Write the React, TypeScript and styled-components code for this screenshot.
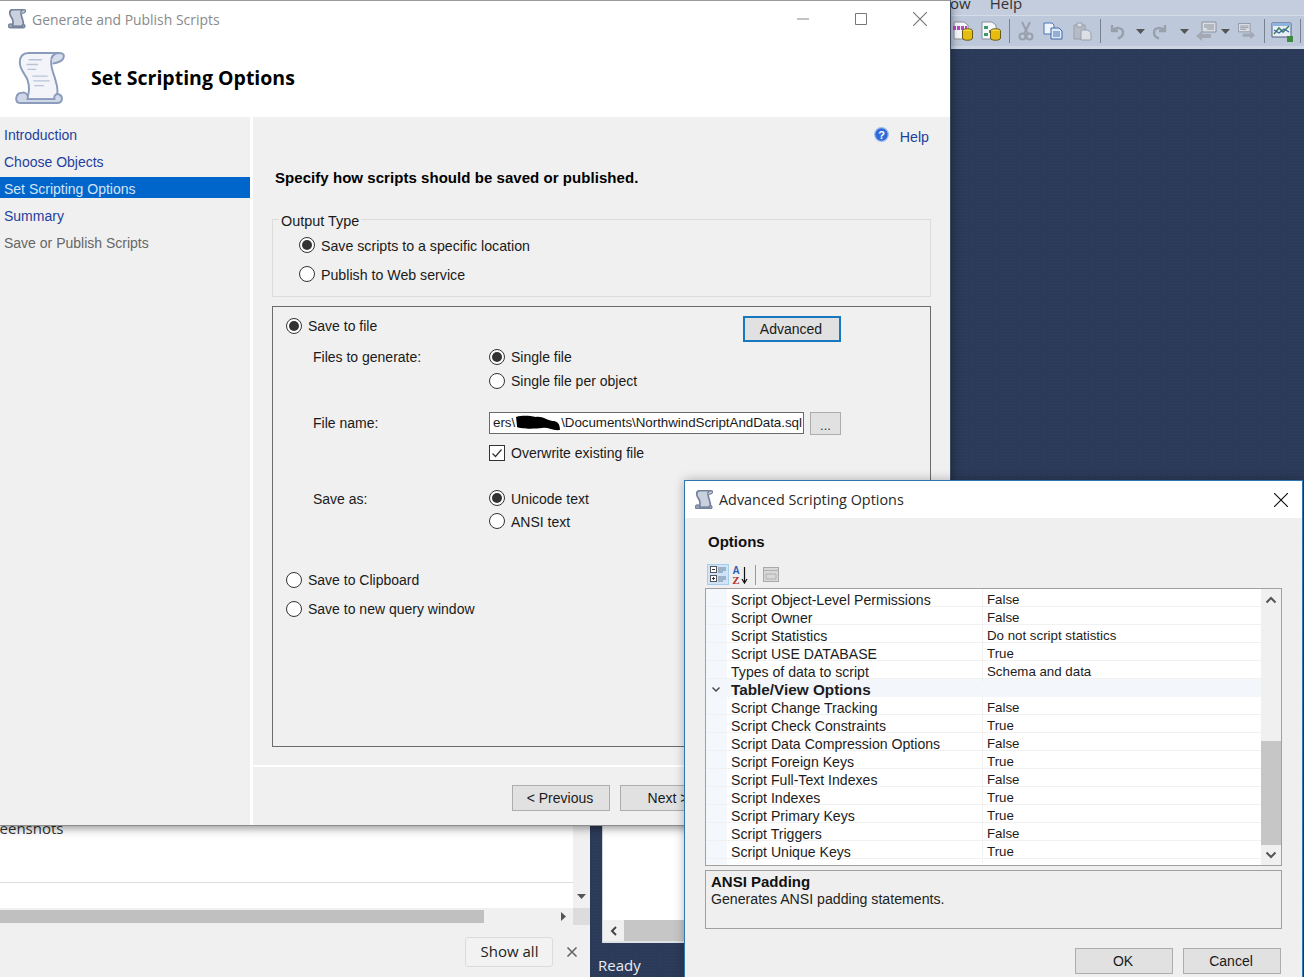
import React from "react";
import styled, { createGlobalStyle } from "styled-components";

const Global = createGlobalStyle`
  html, body { margin: 0; padding: 0; background: #2b3a58; }
  * { box-sizing: border-box; }
  body { font-family: "Liberation Sans", Arial, sans-serif; font-size: 14px; color: #1a1a1a; }
`;

const Desktop = styled.div`
  position: relative;
  width: 1304px;
  height: 977px;
  overflow: hidden;
  background-color: #2b3a58;
  background-image: radial-gradient(#31405f 0.6px, transparent 0.7px);
  background-size: 3px 3px;
`;

/* ---------- SSMS behind ---------- */
const SsmsBar = styled.div`
  position: absolute;
  left: 950px;
  top: 0;
  width: 354px;
  height: 49px;
  background: #bdc8da;
  border-bottom: 3px solid #cdd5e3;
  overflow: hidden;
`;
const MenuStrip = styled.div`
  height: 16px;
  background: #c3cdde;
  border-bottom: 1px solid #d5dce8;
  display: flex;
  align-items: flex-end;
  font-size: 15px;
  color: #333;
  line-height: 14px;
  font-family: "Open Sans", sans-serif;
  padding-bottom: 5px;
  overflow: visible;
`;
const MenuItem = styled.span<{ $ml: number }>`
  margin-left: ${(p) => p.$ml}px;
`;
const ToolRow = styled.div`
  display: flex;
  align-items: center;
  height: 30px;
`;
const Slot = styled.div<{ $w: number; $ml: number }>`
  width: ${(p) => p.$w}px;
  margin-left: ${(p) => p.$ml}px;
  height: 22px;
  flex: none;
  display: flex;
  align-items: center;
  justify-content: center;
`;
const ToolSep = styled.div<{ $ml: number }>`
  width: 1px;
  height: 24px;
  flex: none;
  background: #77818f;
  margin-left: ${(p) => p.$ml}px;
`;

/* ---------- browser behind ---------- */
const BrowserPane = styled.div`
  position: absolute;
  left: 0;
  top: 825px;
  width: 590px;
  height: 152px;
  background: #f0f0f0;
  display: flex;
  flex-direction: column;
  overflow: hidden;
`;
const BrowserTop = styled.div`
  height: 100px;
  flex: none;
  display: grid;
  grid-template-columns: 573px 17px;
  grid-template-rows: 83px 17px;
  border-bottom: 1px solid #d9d9d9;
`;
const BrowserList = styled.div`
  background: #fff;
`;
const ScreenshotsCell = styled.div`
  height: 58px;
  border-bottom: 1px solid #dcdcdc;
  font-family: "Open Sans", sans-serif;
  font-size: 15px;
  line-height: 6px;
  color: #333;
  white-space: nowrap;
  overflow: hidden;
`;
const ClippedWord = styled.span`
  display: block;
  margin-left: -22px;
`;
const VTrack = styled.div`
  background: #f0f0f0;
  display: flex;
  align-items: flex-end;
  justify-content: center;
  padding-bottom: 7px;
`;
const HTrack = styled.div`
  background: #f0f0f0;
  display: flex;
  align-items: center;
  padding: 2px 5px 2px 0;
  justify-content: space-between;
`;
const HThumb = styled.div`
  width: 484px;
  height: 13px;
  background: #c0c0c0;
`;
const Corner = styled.div`
  background: #dcdcdc;
`;
const BrowserFoot = styled.div`
  display: flex;
  align-items: center;
  justify-content: flex-end;
  gap: 13px;
  padding: 12px 12px 0 0;
`;
const ShowAll = styled.button`
  width: 88px;
  height: 30px;
  background: #f2f2f2;
  border: 1px solid #dcdcdc;
  border-radius: 3px;
  font-family: "Open Sans", sans-serif;
  font-size: 15px;
  color: #222;
  padding: 0 0 2px 1px;
`;

/* ---------- results pane behind ---------- */
const ResultsPane = styled.div`
  position: absolute;
  left: 602px;
  top: 825px;
  width: 90px;
  height: 118px;
  background: #fff;
  border-left: 1px solid #cfd3da;
  border-bottom: 2px solid #dfe2e6;
  display: flex;
  flex-direction: column;
  justify-content: flex-end;
`;
const ResultsScroll = styled.div`
  height: 21px;
  background: #f0f0f0;
  display: flex;
  align-items: center;
`;
const ResultsArrow = styled.div`
  width: 21px;
  display: flex;
  justify-content: center;
`;
const ResultsThumb = styled.div`
  flex: 1;
  height: 21px;
  background: #c6c6c6;
`;
const ReadyText = styled.div`
  position: absolute;
  left: 598px;
  top: 955px;
  font-family: "Open Sans", sans-serif;
  font-size: 15px;
  line-height: 20px;
  color: #e8ecf3;
`;

/* ---------- dialogs ---------- */
const MainDialog = styled.section`
  position: absolute;
  left: 0;
  top: 0;
  width: 951px;
  height: 826px;
  background: #fff;
  border-top: 1px solid #9a9a9a;
  border-right: 1px solid #3c4a63;
  border-bottom: 1px solid #8c8c8c;
  box-shadow: 0 2px 9px rgba(0, 0, 0, 0.45);
  display: flex;
  flex-direction: column;
  overflow: hidden;
`;
const TitleBar = styled.header`
  height: 37px;
  flex: none;
  display: flex;
  align-items: center;
  background: #fff;
  padding: 0 0 1px 8px;
`;
const TitleText = styled.span<{ $dark?: boolean }>`
  font-family: "Open Sans", sans-serif;
  font-size: ${(p) => (p.$dark ? 14.4 : 13.95)}px;
  margin-left: 6px;
  color: ${(p) => (p.$dark ? "#2a2a2a" : "#8a8a8a")};
  flex: 1;
  white-space: nowrap;
`;
const WinBtn = styled.div<{ $w: number }>`
  width: ${(p) => p.$w}px;
  display: flex;
  justify-content: center;
  align-items: center;
  flex: none;
`;
const Banner = styled.div`
  height: 79px;
  flex: none;
  display: flex;
  align-items: center;
  padding-left: 15px;
  gap: 26px;
`;
const PageTitle = styled.h1`
  margin: 0;
  font-family: "Open Sans", sans-serif;
  font-size: 19.5px;
  font-weight: 700;
  color: #000;
`;
const Body = styled.div`
  flex: 1;
  min-height: 0;
  display: flex;
  background: #fff;
`;
const Sidebar = styled.nav`
  width: 250px;
  flex: none;
  background: #f0f0f0;
  padding-top: 6px;
  display: flex;
  flex-direction: column;
  gap: 6px;
`;
const NavItem = styled.div<{ $kind?: "on" | "off" }>`
  height: 21px;
  line-height: 25px;
  padding-left: 4px;
  white-space: nowrap;
  color: ${(p) => (p.$kind === "on" ? "#d4e3f6" : p.$kind === "off" ? "#666" : "#1f3f9e")};
  background: ${(p) => (p.$kind === "on" ? "#0066cc" : "transparent")};
`;
const Content = styled.div`
  margin-left: 3px;
  flex: 1;
  min-width: 0;
  background: #f0f0f0;
  display: flex;
  flex-direction: column;
`;
const HelpRow = styled.div`
  height: 40px;
  flex: none;
  display: flex;
  align-items: center;
  justify-content: flex-end;
  padding-right: 21px;
`;
const HelpBadge = styled.span`
  display: flex;
  margin: -5px 11px 0 0;
`;
const HelpLink = styled.span`
  color: #1c3e9e;
  font-size: 14.2px;
`;
const Lead = styled.h2`
  margin: 11px 0 0 22px;
  font-size: 15px;
  line-height: 20px;
  font-weight: 700;
  color: #000;
  letter-spacing: 0.05px;
`;
const Stack = styled.div`
  padding: 0 19px;
  margin-top: 22px;
`;
const OutputBox = styled.fieldset`
  margin: 0;
  height: 87px;
  padding: 0;
  border: 1px solid #dcdcdc;
`;
const OutputLegend = styled.legend`
  margin-left: 6px;
  padding: 4px 2px 0;
  line-height: 14px;
  font-size: 14.4px;
`;
const OutputRow = styled.div<{ $first?: boolean }>`
  height: 29px;
  margin-top: ${(p) => (p.$first ? 3 : 0)}px;
  padding-left: 26px;
  display: flex;
  align-items: center;
  font-size: 14.2px;
`;
const SavePanel = styled.div`
  margin-top: 9px;
  height: 441px;
  border: 1px solid #6b6b6b;
  padding-top: 9px;
  padding-left: 13px;
`;
const SaveHead = styled.div`
  display: flex;
  justify-content: space-between;
  align-items: flex-start;
  padding-right: 89px;
  height: 26px;
`;
const Choice = styled.div<{ $h?: number; $mt?: number }>`
  height: ${(p) => p.$h ?? 20}px;
  margin-top: ${(p) => p.$mt ?? 0}px;
  display: flex;
  align-items: center;
  white-space: nowrap;
`;
const Radio = styled.span<{ $on?: boolean }>`
  width: 16px;
  height: 16px;
  flex: none;
  border-radius: 50%;
  border: 1.5px solid #333;
  background: #fff;
  display: flex;
  align-items: center;
  justify-content: center;
  margin-right: 6px;
  margin-top: -1px;
  &::after {
    content: "";
    width: 10px;
    height: 10px;
    border-radius: 50%;
    background: ${(p) => (p.$on ? "#333" : "transparent")};
  }
`;
const CheckBox = styled.span`
  width: 16px;
  height: 16px;
  flex: none;
  border: 1px solid #333;
  background: #fff;
  display: flex;
  align-items: center;
  justify-content: center;
  margin-right: 6px;
`;
const FormRow = styled.div<{ $h: number; $mt?: number }>`
  display: grid;
  grid-template-columns: 176px 1fr;
  align-items: center;
  height: ${(p) => p.$h}px;
  margin-top: ${(p) => p.$mt ?? 0}px;
  padding-left: 27px;
  white-space: nowrap;
`;
const FileLine = styled.div`
  display: flex;
  gap: 6px;
  align-items: flex-start;
`;
const FileInput = styled.div`
  width: 315px;
  height: 22px;
  background: #fff;
  border: 1px solid #6a6a6a;
  padding-left: 3px;
  line-height: 20px;
  font-size: 13.4px;
  display: flex;
  align-items: center;
  white-space: nowrap;
  overflow: hidden;
  letter-spacing: -0.05px;
`;
const Browse = styled.button`
  width: 31px;
  height: 23px;
  background: #e1e1e1;
  border: 1px solid #adadad;
  padding: 4px 0 0;
  font: inherit;
  font-size: 13px;
  color: #333;
`;
const Btn = styled.button<{ $focus?: boolean }>`
  width: 98px;
  height: 26px;
  flex: none;
  background: #e1e1e1;
  border: ${(p) => (p.$focus ? "2px solid #1777c0" : "1px solid #adadad")};
  padding: 0 2px 0 0;
  font-family: inherit;
  font-size: 14px;
  color: #1a1a1a;
  white-space: nowrap;
`;
const Divider = styled.div`
  margin-top: 18px;
  height: 2px;
  background: #fff;
  flex: none;
`;
const Footer = styled.div`
  display: flex;
  gap: 10px;
  padding: 18px 0 0 259px;
`;

/* ---------- advanced dialog ---------- */
const AdvDialog = styled.section`
  position: absolute;
  left: 684px;
  top: 480px;
  width: 619px;
  height: 500px;
  background: #efefef;
  border: 1px solid #2f75b0;
  box-shadow: 0 0 10px rgba(0, 0, 0, 0.28);
  display: flex;
  flex-direction: column;
`;
const AdvTitle = styled.header`
  height: 37px;
  flex: none;
  background: #fff;
  display: flex;
  align-items: center;
  padding-left: 10px;
`;
const AdvBody = styled.div`
  padding: 15px 20px 0;
`;
const OptionsHead = styled.div`
  font-weight: 700;
  font-size: 15px;
  line-height: 18px;
  padding-left: 3px;
  color: #111;
`;
const MiniBar = styled.div`
  margin-top: 13px;
  height: 21px;
  padding-left: 2px;
  display: flex;
  align-items: center;
`;
const MiniBtn = styled.div<{ $on?: boolean }>`
  width: ${(p) => (p.$on ? 22 : 21)}px;
  height: 21px;
  display: flex;
  align-items: center;
  justify-content: center;
  background: ${(p) => (p.$on ? "#cfe4f7" : "transparent")};
  border: 1px solid ${(p) => (p.$on ? "#a5cdee" : "transparent")};
`;
const MiniSep = styled.div`
  width: 1px;
  height: 20px;
  margin: 0 4px 0 5px;
  background: #9a9a9a;
`;
const GridBox = styled.div`
  margin-top: 3px;
  height: 278px;
  border: 1px solid #a0a0a0;
  background: #fff;
  display: flex;
`;
const GridRows = styled.div`
  flex: 1;
  min-width: 0;
  background: linear-gradient(to right, #f4f7fc 21px, #fff 21px);
`;
const PropRow = styled.div<{ $group?: boolean }>`
  display: grid;
  grid-template-columns: 21px 255px 1fr;
  height: 18px;
  line-height: 22px;
  border-bottom: 1px solid ${(p) => (p.$group ? "#f3f6fb" : "#f1f1f1")};
  background: ${(p) => (p.$group ? "#f3f6fb" : "transparent")};
  font-weight: ${(p) => (p.$group ? 700 : 400)};
  font-size: ${(p) => (p.$group ? 15.3 : 14.1)}px;
  color: #1c1c1c;
  white-space: nowrap;
`;
const ChevCell = styled.div`
  display: flex;
  align-items: center;
  justify-content: center;
  margin-left: -1px;
`;
const PropName = styled.div`
  padding-left: 4px;
`;
const PropValue = styled.div`
  padding-left: 4px;
  border-left: 1px solid #f1f1f1;
  font-size: 13.3px;
  line-height: 21px;
`;
const VScroll = styled.div`
  width: 20px;
  flex: none;
  background: #f0f0f0;
  display: flex;
  flex-direction: column;
`;
const ArrowCell = styled.div<{ $h: number }>`
  height: ${(p) => p.$h}px;
  display: flex;
  align-items: center;
  justify-content: center;
`;
const VSpacer = styled.div`
  height: 130px;
`;
const VThumb = styled.div`
  height: 104px;
  background: #c6c6c6;
`;
const DescBox = styled.div`
  margin-top: 4px;
  height: 59px;
  border: 1px solid #a0a0a0;
  padding: 3px 0 0 5px;
  line-height: 16px;
`;
const DescTitle = styled.div`
  font-weight: 700;
  font-size: 15px;
  color: #111;
`;
const DescText = styled.div`
  margin-top: 1px;
  font-size: 14.15px;
  color: #222;
`;
const AdvFooter = styled.div`
  margin-top: 19px;
  display: flex;
  justify-content: flex-end;
  gap: 10px;
  padding-right: 1px;
`;

/* ---------- drawings ---------- */
const ScrollIcon = ({ size, small }: { size: number; small?: boolean }) => (
  <svg width={size} height={size * 1.08} viewBox="0 0 52 56">
    <path d="M14 2C8 2 5 6 5 12C5 20 11 24 13 30C15 36 15 44 12 50H42C46 44 44 36 42 30C40 22 36 16 38 8C39 4 42 2 46 2Z" fill={small ? "#c9d1de" : "#f2f4f9"} stroke={small ? "#75849c" : "#8a9bbb"} strokeWidth={small ? 5 : 2} />
    <path d="M38 8C39 4 42 2 46 2C50 2 52 4 50 8C49 10 45 12 39 13" fill="#d5dcea" stroke={small ? "#75849c" : "#8a9bbb"} strokeWidth={small ? 4 : 2} />
    <path d="M4 44C0 47 0 54 6 54H44C50 54 50 47 46 45C43 44 40 46 41 50H13C14 47 13 44 9 43Z" fill={small ? "#9aa8bd" : "#cfd7e8"} stroke={small ? "#75849c" : "#8a9bbb"} strokeWidth={small ? 4 : 2} />
    {!small && <path d="M14 9H28M12 14H24M13 19H22M18 26H34M19 31H36M20 36H30" stroke="#b9c3d6" strokeWidth="1.4" fill="none" />}
  </svg>
);
const Line = ({ d, size, color, w = 1 }: { d: string; size: number; color: string; w?: number }) => (
  <svg width={size} height={size} viewBox="0 0 12 12">
    <path d={d} fill="none" stroke={color} strokeWidth={w} />
  </svg>
);
const HelpIcon = () => (
  <svg width="15" height="15" viewBox="0 0 15 15">
    <circle cx="7.5" cy="7.5" r="6.8" fill="#2f6ad6" stroke="#9dbbef" strokeWidth="1.2" />
    <text x="7.5" y="11.5" textAnchor="middle" fontFamily="Liberation Sans" fontWeight="700" fontSize="11" fill="#fff">?</text>
  </svg>
);
const Blob = () => (
  <svg width="46" height="16" viewBox="0 0 44 16" preserveAspectRatio="none" style={{ flex: "none" }}>
    <path d="M1 2C8 0 14 1 20 2C26 1 30 5 36 6C40 6 43 8 43 15C36 16 32 12 26 13C18 14 6 14 2 12Z" fill="#000" />
  </svg>
);
const Tri = ({ dir }: { dir: "down" | "right" }) => (
  <svg width="9" height="9" viewBox="0 0 9 9">
    <path d={dir === "down" ? "M0 2H9L4.5 7Z" : "M2 0L7 4.5L2 9Z"} fill="#555" />
  </svg>
);
const DbIcon = ({ pink }: { pink: boolean }) => (
  <svg width="21" height="20" viewBox="0 0 21 20">
    <path d="M2 1H12L16 4V18H2Z" fill="#f7f8fb" stroke="#8a8f98" />
    {pink ? <path d="M1 7H15" stroke="#b848c0" strokeWidth="4" strokeDasharray="3 1" /> : <path d="M4 5H8V8H4ZM9 9H13V12H9ZM4 12H8V15H4Z" fill="#3d9a68" />}
    <ellipse cx="15.5" cy="10" rx="5" ry="2.2" fill="#f5dc3c" stroke="#6a5a10" />
    <path d="M10.5 10V17C10.5 20 20.5 20 20.5 17V10" fill="#e6bb12" stroke="#6a5a10" />
  </svg>
);
const Cut = () => (
  <svg width="16" height="20" viewBox="0 0 16 20">
    <path d="M4 1L10 13M12 1L6 13" stroke="#98a0ac" strokeWidth="2" />
    <circle cx="4.5" cy="15.5" r="3" fill="none" stroke="#98a0ac" strokeWidth="2" />
    <circle cx="11.5" cy="15.5" r="3" fill="none" stroke="#98a0ac" strokeWidth="2" />
  </svg>
);
const Copy = () => (
  <svg width="20" height="18" viewBox="0 0 20 18">
    <path d="M1 1H9L11 3V12H1Z" fill="#eef3fb" stroke="#4d74b4" />
    <path d="M8 6H16L19 9V17H8Z" fill="#dde8f8" stroke="#3f68ac" />
    <path d="M10 10H17M10 12H17M10 14H17" stroke="#4d74b4" />
  </svg>
);
const Paste = () => (
  <svg width="20" height="19" viewBox="0 0 20 19">
    <path d="M2 3H13V17H2Z" fill="#b6bcc6" stroke="#9aa0aa" />
    <path d="M5 1H10V5H5Z" fill="#d8dce3" stroke="#9aa0aa" />
    <path d="M9 8H16L19 11V18H9Z" fill="#dcdfe5" stroke="#9aa0aa" />
  </svg>
);
const Undo = ({ flip }: { flip?: boolean }) => (
  <svg width="16" height="17" viewBox="0 0 16 17" style={flip ? { transform: "scaleX(-1)" } : undefined}>
    <path d="M3 2V8H9M3.5 7.5C7 3.5 14 4.5 14 9.5C14 12.5 12 14.5 9 15.5" fill="none" stroke="#98a0ac" strokeWidth="2.4" />
  </svg>
);
const Nav = ({ back }: { back?: boolean }) => (
  <svg width="24" height="20" viewBox="0 0 24 20" style={back ? { transform: "scaleX(-1)" } : undefined}>
    <path d="M3 1H17V11H3Z" fill="#d9dde4" stroke="#8c929c" />
    <path d="M5 4H15M5 6H15M5 8H12" stroke="#8c929c" />
    <path d="M8 13H17V10L23 15L17 20V17H8Z" fill="#a2a9b5" />
  </svg>
);
const Chart = () => (
  <svg width="23" height="21" viewBox="0 0 23 21">
    <path d="M1 2H20V16H1Z" fill="#e9eef6" stroke="#4a5f80" />
    <path d="M1 2H20V5H1Z" fill="#8fb3de" />
    <path d="M3 13L8 7L12 11L18 5" fill="none" stroke="#3f8a5a" strokeWidth="1.6" />
    <path d="M3 9L8 12L13 8L18 11" fill="none" stroke="#3d62a8" strokeWidth="1.2" />
    <path d="M16 15H22V21H16Z" fill="#3f8a3f" />
  </svg>
);
const ListIcon = () => (
  <svg width="17" height="17" viewBox="0 0 17 17">
    <rect x="0.5" y="0.5" width="6" height="6" fill="#fff" stroke="#555" />
    <rect x="0.5" y="9.5" width="6" height="6" fill="#fff" stroke="#555" />
    <path d="M2 3.5H5M2 12.5H5M3.5 11V14" stroke="#333" />
    <path d="M8 2H16M8 4H16M8 6H13M8 11H16M8 13H16M8 15H13" stroke="#6a7f9e" />
  </svg>
);
const SortIcon = () => (
  <svg width="18" height="20" viewBox="0 0 18 20">
    <text x="5" y="9" textAnchor="middle" fontFamily="Liberation Sans" fontWeight="700" fontSize="10" fill="#2f5fb5">A</text>
    <text x="5" y="19" textAnchor="middle" fontFamily="Liberation Serif" fontWeight="700" fontSize="11" fill="#b03030">Z</text>
    <path d="M13.5 2V17M11 14L13.5 18L16 14" fill="none" stroke="#111" strokeWidth="1.2" />
  </svg>
);
const PagesIcon = () => (
  <svg width="16" height="15" viewBox="0 0 16 15">
    <rect x="0.5" y="0.5" width="15" height="14" fill="#d8d8d8" stroke="#a8a8a8" />
    <path d="M0.5 3.5H15.5M3 7H13V12H3Z" fill="none" stroke="#b0b0b0" />
  </svg>
);

/* ---------- data ---------- */
const props: [string, string][] = [
  ["Script Object-Level Permissions", "False"],
  ["Script Owner", "False"],
  ["Script Statistics", "Do not script statistics"],
  ["Script USE DATABASE", "True"],
  ["Types of data to script", "Schema and data"],
  ["#Table/View Options", ""],
  ["Script Change Tracking", "False"],
  ["Script Check Constraints", "True"],
  ["Script Data Compression Options", "False"],
  ["Script Foreign Keys", "True"],
  ["Script Full-Text Indexes", "False"],
  ["Script Indexes", "True"],
  ["Script Primary Keys", "True"],
  ["Script Triggers", "False"],
  ["Script Unique Keys", "True"],
];
const navItems: [string, "on" | "off" | undefined][] = [
  ["Introduction", undefined],
  ["Choose Objects", undefined],
  ["Set Scripting Options", "on"],
  ["Summary", undefined],
  ["Save or Publish Scripts", "off"],
];

export default function App() {
  return (
    <Desktop>
      <Global />
      <SsmsBar>
        <MenuStrip>
          <MenuItem $ml={0}>ow</MenuItem>
          <MenuItem $ml={19}>Help</MenuItem>
        </MenuStrip>
        <ToolRow>
          <Slot $w={21} $ml={2}><DbIcon pink /></Slot>
          <Slot $w={21} $ml={7}><DbIcon pink={false} /></Slot>
          <ToolSep $ml={8} />
          <Slot $w={16} $ml={8}><Cut /></Slot>
          <Slot $w={20} $ml={9}><Copy /></Slot>
          <Slot $w={20} $ml={9}><Paste /></Slot>
          <ToolSep $ml={8} />
          <Slot $w={16} $ml={8}><Undo /></Slot>
          <Slot $w={9} $ml={11}><Tri dir="down" /></Slot>
          <Slot $w={16} $ml={7}><Undo flip /></Slot>
          <Slot $w={9} $ml={12}><Tri dir="down" /></Slot>
          <Slot $w={24} $ml={6}><Nav back /></Slot>
          <Slot $w={9} $ml={2}><Tri dir="down" /></Slot>
          <Slot $w={20} $ml={6}><Nav /></Slot>
          <ToolSep $ml={8} />
          <Slot $w={23} $ml={6}><Chart /></Slot>
          <ToolSep $ml={6} />
        </ToolRow>
      </SsmsBar>

      <BrowserPane>
        <BrowserTop>
          <BrowserList>
            <ScreenshotsCell><ClippedWord>Screenshots</ClippedWord></ScreenshotsCell>
          </BrowserList>
          <VTrack><Tri dir="down" /></VTrack>
          <HTrack>
            <HThumb />
            <Tri dir="right" />
          </HTrack>
          <Corner />
        </BrowserTop>
        <BrowserFoot>
          <ShowAll>Show all</ShowAll>
          <Line d="M1.5 1.5L10.5 10.5M10.5 1.5L1.5 10.5" size={12} color="#666" w={1.6} />
        </BrowserFoot>
      </BrowserPane>

      <ResultsPane>
        <ResultsScroll>
          <ResultsArrow><Line d="M8 2L4 6L8 10" size={12} color="#444" w={2} /></ResultsArrow>
          <ResultsThumb />
        </ResultsScroll>
      </ResultsPane>
      <ReadyText>Ready</ReadyText>

      <MainDialog>
        <TitleBar>
          <ScrollIcon size={18} small />
          <TitleText>Generate and Publish Scripts</TitleText>
          <WinBtn $w={58}><Line d="M0 6H12" size={12} color="#888" /></WinBtn>
          <WinBtn $w={58}><Line d="M.5.5H11.5V11.5H.5Z" size={12} color="#777" /></WinBtn>
          <WinBtn $w={60}><Line d="M0 0L12 12M12 0L0 12" size={14} color="#777" /></WinBtn>
        </TitleBar>
        <Banner>
          <ScrollIcon size={50} />
          <PageTitle>Set Scripting Options</PageTitle>
        </Banner>
        <Body>
          <Sidebar>
            {navItems.map(([t, k]) => (
              <NavItem key={t} $kind={k}>{t}</NavItem>
            ))}
          </Sidebar>
          <Content>
            <HelpRow>
              <HelpBadge><HelpIcon /></HelpBadge>
              <HelpLink>Help</HelpLink>
            </HelpRow>
            <Lead>Specify how scripts should be saved or published.</Lead>
            <Stack>
              <OutputBox>
                <OutputLegend>Output Type</OutputLegend>
                <OutputRow $first><Radio $on />Save scripts to a specific location</OutputRow>
                <OutputRow><Radio />Publish to Web service</OutputRow>
              </OutputBox>
              <SavePanel>
                <SaveHead>
                  <Choice><Radio $on />Save to file</Choice>
                  <Btn $focus>Advanced</Btn>
                </SaveHead>
                <FormRow $h={24} $mt={3}>
                  <span>Files to generate:</span>
                  <Choice><Radio $on />Single file</Choice>
                </FormRow>
                <FormRow $h={24}>
                  <span />
                  <Choice><Radio />Single file per object</Choice>
                </FormRow>
                <FormRow $h={26} $mt={17}>
                  <span>File name:</span>
                  <FileLine>
                    <FileInput>ers\<Blob />\Documents\NorthwindScriptAndData.sql</FileInput>
                    <Browse>...</Browse>
                  </FileLine>
                </FormRow>
                <FormRow $h={22} $mt={6}>
                  <span />
                  <Choice>
                    <CheckBox><Line d="M1.5 6.5L4.5 9.5L10.5 2.5" size={12} color="#333" w={1.2} /></CheckBox>
                    Overwrite existing file
                  </Choice>
                </FormRow>
                <FormRow $h={23} $mt={23}>
                  <span>Save as:</span>
                  <Choice><Radio $on />Unicode text</Choice>
                </FormRow>
                <FormRow $h={23}>
                  <span />
                  <Choice><Radio />ANSI text</Choice>
                </FormRow>
                <Choice $h={22} $mt={36}><Radio />Save to Clipboard</Choice>
                <Choice $h={22} $mt={7}><Radio />Save to new query window</Choice>
              </SavePanel>
            </Stack>
            <Divider />
            <Footer>
              <Btn>&lt; Previous</Btn>
              <Btn>Next &gt;</Btn>
            </Footer>
          </Content>
        </Body>
      </MainDialog>

      <AdvDialog>
        <AdvTitle>
          <ScrollIcon size={18} small />
          <TitleText $dark>Advanced Scripting Options</TitleText>
          <WinBtn $w={42}><Line d="M0 0L12 12M12 0L0 12" size={14} color="#111" /></WinBtn>
        </AdvTitle>
        <AdvBody>
          <OptionsHead>Options</OptionsHead>
          <MiniBar>
            <MiniBtn $on><ListIcon /></MiniBtn>
            <MiniBtn><SortIcon /></MiniBtn>
            <MiniSep />
            <MiniBtn><PagesIcon /></MiniBtn>
          </MiniBar>
          <GridBox>
            <GridRows>
              {props.map(([n, v]) =>
                n.startsWith("#") ? (
                  <PropRow key={n} $group>
                    <ChevCell><Line d="M2.5 3.5L6 7L9.5 3.5" size={12} color="#444" w={1.4} /></ChevCell>
                    <PropName>{n.slice(1)}</PropName>
                    <div />
                  </PropRow>
                ) : (
                  <PropRow key={n}>
                    <div />
                    <PropName>{n}</PropName>
                    <PropValue>{v}</PropValue>
                  </PropRow>
                )
              )}
            </GridRows>
            <VScroll>
              <ArrowCell $h={22}><Line d="M1.5 8.5L6 4L10.5 8.5" size={12} color="#555" w={2} /></ArrowCell>
              <VSpacer />
              <VThumb />
              <ArrowCell $h={20}><Line d="M1.5 3.5L6 8L10.5 3.5" size={12} color="#555" w={2} /></ArrowCell>
            </VScroll>
          </GridBox>
          <DescBox>
            <DescTitle>ANSI Padding</DescTitle>
            <DescText>Generates ANSI padding statements.</DescText>
          </DescBox>
          <AdvFooter>
            <Btn>OK</Btn>
            <Btn>Cancel</Btn>
          </AdvFooter>
        </AdvBody>
      </AdvDialog>
    </Desktop>
  );
}
